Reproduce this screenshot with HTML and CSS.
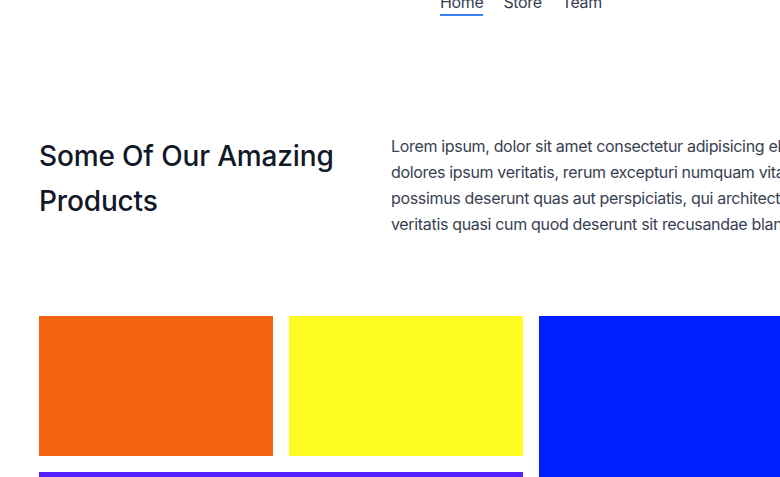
FILE: index.html
```html
<!DOCTYPE html>
<html lang="en">
<head>
<meta charset="utf-8">
<title>Products</title>
<link rel="stylesheet" href="styles.css">
</head>
<body>
<div class="page">
  <header class="header">
    <nav class="nav">
      <a class="nav-link active" href="#">Home</a>
      <a class="nav-link" href="#">Store</a>
      <a class="nav-link" href="#">Team</a>
    </nav>
  </header>
  <section class="intro">
    <h1 class="title">Some Of Our Amazing Products</h1>
    <p class="lead">Lorem ipsum, dolor sit amet consectetur adipisicing elit. Eveniet,<br>dolores ipsum veritatis, rerum excepturi numquam vitae nobis<br>possimus deserunt quas aut perspiciatis, qui architecto nemo<br>veritatis quasi cum quod deserunt sit recusandae blanditiis.</p>
  </section>
  <section class="products">
    <div class="tile tile-orange"></div>
    <div class="tile tile-yellow"></div>
    <div class="tile tile-blue"></div>
    <div class="tile tile-purple"></div>
  </section>
</div>
</body>
</html>
```
FILE: styles.css
```css
html, body {
  margin: 0;
  padding: 0;
  overflow: hidden;
  background: #ffffff;
}
body {
  font-family: Inter, "Liberation Sans", sans-serif;
  color: #111827;
}
.page {
  width: 1062px;
  padding: 0 39px;
  box-sizing: border-box;
}
.header {
  margin-top: -10px;
  display: flex;
  padding-left: 401px;
}
.nav {
  display: flex;
  gap: 20px;
}
.nav-link {
  font-size: 16px;
  line-height: 24px;
  letter-spacing: -0.35px;
  color: #374151;
  text-decoration: none;
  border-bottom: 2px solid transparent;
  height: 24px;
}
.nav-link.active {
  border-bottom-color: #3b82f6;
}
.intro {
  display: grid;
  grid-template-columns: 320px 1fr;
  gap: 32px;
  margin-top: 117px;
}
.title {
  margin: 0;
  font-size: 28px;
  line-height: 45px;
  letter-spacing: -0.15px;
  font-weight: 500;
  color: #111827;
  padding-top: 1px;
}
.lead {
  margin: 0;
  font-size: 16px;
  line-height: 26px;
  letter-spacing: -0.33px;
  color: #374151;
  white-space: nowrap;
}
.products {
  display: grid;
  grid-template-columns: repeat(4, 234px);
  grid-template-rows: 140px 140px;
  gap: 16px;
  margin-top: 79px;
}
.tile-orange { background: #f26410; }
.tile-yellow { background: #fefc22; }
.tile-blue { background: #001eff; grid-row: span 2; grid-column: span 2; }
.tile-purple { background: #5322ff; grid-column: span 2; }
```
